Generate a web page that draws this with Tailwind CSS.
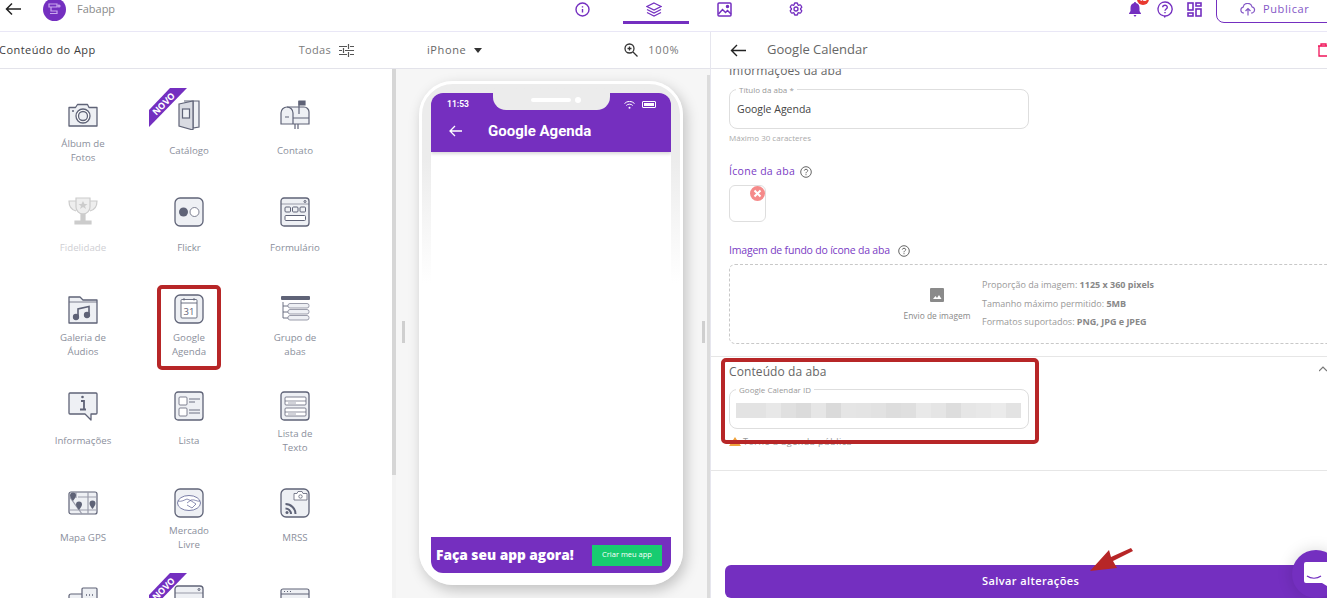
<!DOCTYPE html>
<html lang="pt-BR">
  <head>
    <meta charset="UTF-8" />
    <meta name="viewport" content="width=device-width, initial-scale=1.0" />
    <script src="https://cdn.jsdelivr.net/npm/@tailwindcss/browser@4"></script>
    <title>Fabapp</title>
  </head>
  <body class="bg-white">
    <div class="relative w-[1327px] h-[598px] overflow-hidden flex flex-col font-['Open_Sans',sans-serif] text-[#555]">
      <!-- top bar -->
      <header class="h-[32px] shrink-0 border-b border-[#e9e7f6] pb-[13px] flex items-center">
        <div class="w-[547px] flex items-center">
          <svg class="ml-[5px] w-[17px] h-[14px]" viewBox="0 0 17 14" fill="none" stroke="#222" stroke-width="1.5"><path d="M16 7H1.5M7 1.5 1.5 7 7 12.5" /></svg>
          <div class="ml-[21px] w-[23px] h-[23px] rounded-full bg-[#742fc0] flex items-center justify-center">
            <svg class="w-[13px] h-[13px]" viewBox="0 0 13 13" fill="none" stroke="#c9a8ee" stroke-width="1.2"><path d="M1 1h8v3H1zM3 4v4h6v2.500H2" /><circle cx="11" cy="3" r="1" /></svg>
          </div>
          <span class="ml-[11px] text-[11px] text-[#8a8a8a]">Fabapp</span>
        </div>
        <nav class="flex items-center">
          <div class="w-[71px] flex justify-center">
            <svg class="w-[15px] h-[15px]" viewBox="0 0 15 15" fill="none" stroke="#742fc0" stroke-width="1.4"><circle cx="7.500" cy="7.500" r="6.500" /><path d="M7.500 7v3.500M7.500 4.300v1.200" /></svg>
          </div>
          <div class="relative w-[71px] flex justify-center">
            <svg class="w-[16px] h-[15px]" viewBox="0 0 16 15" fill="none" stroke="#742fc0" stroke-width="1.2"><path d="M8 1 15 4.500 8 8 1 4.500zM1 7.500 8 11l7-3.500M1 10.500 8 14l7-3.500" /></svg>
            <div class="absolute left-[5px] top-[19px] w-[66px] h-[3px] bg-[#742fc0]"></div>
          </div>
          <div class="w-[71px] flex justify-center">
            <svg class="w-[15px] h-[15px]" viewBox="0 0 15 15" fill="none" stroke="#742fc0" stroke-width="1.5"><rect x="1" y="1" width="13" height="13" rx="1" /><path d="m1.500 12 4-4.500 3 3 2-2 3.500 3.500" /><circle cx="10.500" cy="4.500" r="1" fill="#742fc0" /></svg>
          </div>
          <div class="w-[71px] flex justify-center pl-[1px]">
            <svg class="w-[16px] h-[16px]" viewBox="0 0 24 24" fill="none" stroke="#742fc0" stroke-width="2"><path d="M9.594 3.94c.09-.542.56-.94 1.11-.94h2.593c.55 0 1.02.398 1.11.94l.213 1.281c.063.374.313.686.645.87.074.04.147.083.22.127.325.196.72.257 1.075.124l1.217-.456a1.125 1.125 0 0 1 1.37.49l1.296 2.247a1.125 1.125 0 0 1-.26 1.431l-1.003.827c-.293.241-.438.613-.43.992a7.723 7.723 0 0 1 0 .255c-.008.378.137.75.43.991l1.004.827c.424.35.534.955.26 1.43l-1.298 2.247a1.125 1.125 0 0 1-1.369.491l-1.217-.456c-.355-.133-.75-.072-1.076.124a6.47 6.47 0 0 1-.22.128c-.331.183-.581.495-.644.869l-.213 1.281c-.09.543-.56.94-1.11.94h-2.594c-.55 0-1.019-.398-1.11-.94l-.213-1.281c-.062-.374-.312-.686-.644-.87a6.52 6.52 0 0 1-.22-.127c-.325-.196-.72-.257-1.076-.124l-1.217.456a1.125 1.125 0 0 1-1.369-.49l-1.297-2.247a1.125 1.125 0 0 1 .26-1.431l1.004-.827c.292-.24.437-.613.43-.991a6.932 6.932 0 0 1 0-.255c.007-.38-.138-.751-.43-.992l-1.004-.827a1.125 1.125 0 0 1-.26-1.43l1.297-2.247a1.125 1.125 0 0 1 1.37-.491l1.216.456c.356.133.751.072 1.076-.124.072-.044.146-.086.22-.128.332-.183.582-.495.644-.869l.214-1.28Z" /><path d="M15 12a3 3 0 1 1-6 0 3 3 0 0 1 6 0Z" /></svg>
          </div>
        </nav>
        <div class="ml-auto flex items-center">
          <div class="relative">
            <svg class="w-[14px] h-[15px] block" viewBox="0 0 14 15" fill="#742fc0"><path d="M7 0c.7 0 1 .5 1 1 2.500.6 3.500 2.500 3.500 5v3L13 11.500v.5H1v-.5L2.500 9V6C2.500 3.500 3.500 1.600 6 1c0-.5.300-1 1-1zM5.500 13h3L7 15z" /></svg>
            <span class="absolute left-[9px] -top-[9px] w-[12px] h-[12px] rounded-full bg-[#e8392f] text-white text-[7px] leading-[12px] text-center font-bold">13</span>
          </div>
          <svg class="ml-[15px] w-[16px] h-[17px]" viewBox="0 0 16 17" fill="none" stroke="#742fc0" stroke-width="1.4"><path d="M8 1a7 7 0 1 1-1 13.900l1 1.600" /><path d="M8 1a7 7 0 0 0-2 13.700" /><path d="M5.700 6.300C5.800 3.500 10.300 3.500 10.300 6.200 10.300 8 8 8 8 9.800M8 11v1.200" /></svg>
          <svg class="ml-[14px] w-[15px] h-[15px]" viewBox="0 0 15 15" fill="none" stroke="#742fc0" stroke-width="1.600"><rect x="1" y="1" width="5" height="7" /><rect x="9" y="1" width="5" height="3" /><rect x="1" y="11" width="5" height="3" /><rect x="9" y="7" width="5" height="7" /></svg>
          <div class="ml-[14px] w-[120px] h-[30px] -mt-[8px] -mr-[9px] border border-[#742fc0] rounded-bl-[8px] flex items-center pl-[23px] pt-[2px] mb-[-6px]">
            <svg class="w-[16px] h-[13px]" viewBox="0 0 16 13" fill="none" stroke="#8457c6" stroke-width="1.200"><path d="M4 10H3.500a3 3 0 0 1-.3-5.900A4.500 4.500 0 0 1 12 3.800 3.200 3.200 0 0 1 12.300 10H11" /><path d="M8 12.500V6M5.500 8 8 5.500 10.500 8" /></svg>
            <span class="ml-[7px] text-[11px] tracking-[0.6px] text-[#8457c6]">Publicar</span>
          </div>
        </div>
      </header>

      <div class="flex-1 flex min-h-0">
        <!-- left column: templates + preview -->
        <div class="w-[710px] shrink-0 flex flex-col">
          <div class="h-[37px] shrink-0 border-b border-[#e3e3ea] flex items-center text-[11px]">
            <span class="-ml-[1px] text-[#3d3d3d] tracking-[0.45px]">Conteúdo do App</span>
            <span class="ml-[203px] text-[#7b7b7b] tracking-[0.3px]">Todas</span>
            <svg class="ml-[8px] w-[15px] h-[14px]" viewBox="0 0 15 14" fill="none" stroke="#555" stroke-width="1.200"><path d="M0 3.500h8M11 3.500h4M9.500 1v5M0 7.500h3M6 7.500h9M4.500 5v5M0 11.500h8M11 11.500h4M9.500 9v5" /></svg>
            <span class="ml-[73px] text-[#666] tracking-[0.6px]">iPhone</span>
            <div class="ml-[8px] w-0 h-0 border-x-[4.500px] border-x-transparent border-t-[5px] border-t-[#333]"></div>
            <svg class="ml-[142px] w-[14px] h-[14px]" viewBox="0 0 14 14" fill="none" stroke="#333" stroke-width="1.300"><circle cx="5.500" cy="5.500" r="4.500" /><path d="m9 9 4.500 4.500M3.500 5.500h4M5.500 3.500v4" /></svg>
            <span class="ml-[10px] text-[#777] tracking-[0.8px]">100%</span>
          </div>
          <div class="flex-1 flex min-h-0">
            <!-- template grid -->
            <div class="w-[392px] shrink-0 pl-[30px] pt-[31px] overflow-hidden">
              <div class="grid grid-cols-[repeat(3,106px)] auto-rows-[97px] text-[9.700px] leading-[14px] text-[#8b8f9c] text-center">
                <div class="flex flex-col items-center">
                  <svg class="w-[30px] h-[30px]" viewBox="0 0 30 30" fill="#eef0f4" stroke="#5f6377" stroke-width="1.300"><path d="M1 7.500h6.500l2-3h10l1.500 3h8v18.500H1z" stroke-linejoin="round" /><circle cx="15" cy="16" r="7" fill="#fff" /><circle cx="15" cy="16" r="4.500" /><path d="M4 11h2" /></svg>
                  <div class="mt-[7px] h-[28px] flex items-center">Álbum de<br />Fotos</div>
                </div>
                <div class="relative flex flex-col items-center">
                  <svg class="absolute left-[13px] -top-[12px] w-[38px] h-[39px]" viewBox="0 0 38 39"><path d="M0 22 21 0h17L0 39z" fill="#742fc0" /></svg>
                  <span class="absolute left-[14px] -top-[1px] text-[9px] leading-[10px] font-bold text-white -rotate-45">NOVO</span>
                  <svg class="w-[30px] h-[30px]" viewBox="0 0 30 30" fill="#d9dbe2" stroke="#5f6377" stroke-width="1.200"><path d="M10 1h15v26l-6 1V1" fill="#eef0f4" /><path d="M5 4 19 1v29L5 26z" /><rect x="8.500" y="9" width="7" height="9" fill="#eef0f4" /></svg>
                  <div class="mt-[7px] h-[28px] flex items-center">Catálogo</div>
                </div>
                <div class="flex flex-col items-center">
                  <svg class="w-[30px] h-[30px]" viewBox="0 0 30 30" fill="#eef0f4" stroke="#5f6377" stroke-width="1.200"><path d="M1 24V13a6 6 0 0 1 6-6h17a5 5 0 0 1 5 5v12z" /><path d="M13 24V13a6 6 0 0 0-6-6" fill="none" /><path d="M19 14V1" fill="none" /><path d="M19 1h6v4h-6z" fill="#5f6377" /><path d="M13 18h16M15 24v5M18 24v5M5 17h4" fill="none" /></svg>
                  <div class="mt-[7px] h-[28px] flex items-center">Contato</div>
                </div>

                <div class="flex flex-col items-center">
                  <svg class="w-[30px] h-[30px]" viewBox="0 0 30 30" fill="#eee" stroke="#ccc" stroke-width="1.200"><path d="M8 1h14v9a7 7 0 0 1-14 0zM8 4H1c0 6 3 9 7 10M22 4h7c0 6-3 9-7 10" /><path d="M15 4l1.500 3h3l-2.500 2 1 3-3-2-3 2 1-3-2.500-2h3z" fill="#ccc" stroke="none" /><path d="M13 17h4v6h-4zM7 24h16v3H7z" fill="#ccc" /></svg>
                  <div class="mt-[7px] h-[28px] flex items-center text-[#cfcfd4]">Fidelidade</div>
                </div>
                <div class="flex flex-col items-center">
                  <svg class="w-[30px] h-[30px]" viewBox="0 0 30 30"><rect x="1" y="1" width="28" height="28" rx="5" fill="#eef0f4" stroke="#5f6377" stroke-width="1.300" /><circle cx="9.500" cy="15" r="4.500" fill="#5f6377" /><circle cx="20.500" cy="15" r="4.500" fill="#fff" stroke="#5f6377" stroke-width=".8" /></svg>
                  <div class="mt-[7px] h-[28px] flex items-center">Flickr</div>
                </div>
                <div class="flex flex-col items-center">
                  <svg class="w-[30px] h-[30px]" viewBox="0 0 30 30" fill="none" stroke="#5f6377"><rect x="1" y="1" width="28" height="28" rx="3" fill="#eef0f4" stroke-width="1.300" /><circle cx="25" cy="4.500" r="1" /><path d="M1 7h28" stroke-width=".6" /><rect x="5" y="10" width="5.500" height="5" rx="1" /><rect x="12.500" y="10" width="5.500" height="5" rx="1" /><rect x="20" y="10" width="5.500" height="5" rx="1" /><rect x="5" y="18.500" width="20.500" height="5" rx="1" fill="#fff" /></svg>
                  <div class="mt-[7px] h-[28px] flex items-center">Formulário</div>
                </div>

                <div class="flex flex-col items-center">
                  <svg class="w-[30px] h-[30px]" viewBox="0 0 30 30" fill="#eef0f4" stroke="#5f6377" stroke-width="1.300"><path d="M1 3h11l3 3h14v23H1z" stroke-linejoin="round" /><path d="M1 8h28" stroke-width=".8" /><path d="M10 23V15l11-2.500V21" fill="none" stroke-width="1.600" /><circle cx="8" cy="23" r="2.500" fill="#5f6377" /><circle cx="19" cy="21" r="2.500" fill="#5f6377" /></svg>
                  <div class="mt-[7px] h-[28px] flex items-center">Galeria de<br />Áudios</div>
                </div>
                <div class="relative flex flex-col items-center">
                  <div class="absolute left-[21px] -top-[9px] w-[64px] h-[85px] border-[4px] border-[#b72627] rounded-[5px]"></div>
                  <svg class="w-[30px] h-[30px]" viewBox="0 0 30 30" fill="none" stroke="#5f6377"><rect x="1" y="1" width="28" height="28" rx="5" fill="#eef0f4" stroke-width="1.300" /><rect x="7" y="5.500" width="16" height="18.500" rx="1" fill="#fff" stroke-width=".9" /><path d="M7 9h16M10 4v2.500M20 4v2.500" stroke-width=".9" /><text x="15" y="21" text-anchor="middle" font-size="9.500" font-family="Open Sans" fill="#5f6377" stroke="none">31</text></svg>
                  <div class="mt-[7px] h-[28px] flex items-center">Google<br />Agenda</div>
                </div>
                <div class="flex flex-col items-center">
                  <svg class="w-[30px] h-[30px]" viewBox="0 0 30 30" fill="#eef0f4" stroke="#9b9dab"><rect x="1" y="2" width="29" height="4" rx="1" fill="#5f6377" stroke="none" /><rect x="8" y="9.500" width="21" height="4.500" rx="2" /><rect x="8" y="15.500" width="21" height="4.500" rx="2" /><rect x="8" y="21.500" width="21" height="4.500" rx="2" /><path d="M3 8v16h5M3 12h5M3 18h5" fill="none" stroke="#5f6377" stroke-width=".9" /></svg>
                  <div class="mt-[7px] h-[28px] flex items-center">Grupo de<br />abas</div>
                </div>

                <div class="flex flex-col items-center">
                  <svg class="w-[30px] h-[30px]" viewBox="0 0 30 30" fill="#eef0f4" stroke="#5f6377" stroke-width="1.300"><path d="M2 2h26a1 1 0 0 1 1 1v19a1 1 0 0 1-1 1h-5v6l-6-6H2a1 1 0 0 1-1-1V3a1 1 0 0 1 1-1z" stroke-linejoin="round" /><path d="M13 10h3v8M12 18.500h6" fill="none" stroke-width="1.800" /><circle cx="14.500" cy="6" r="1.300" fill="#5f6377" stroke="none" /></svg>
                  <div class="mt-[6px] h-[28px] flex items-center">Informações</div>
                </div>
                <div class="flex flex-col items-center">
                  <svg class="w-[30px] h-[30px]" viewBox="0 0 30 30" fill="none" stroke="#5f6377"><rect x="1" y="1" width="28" height="28" rx="3" fill="#eef0f4" stroke-width="1.300" /><rect x="5" y="6" width="8" height="8" rx="1" fill="#fff" stroke-width=".8" /><rect x="5" y="17" width="8" height="8" rx="1" fill="#fff" stroke-width=".8" /><path d="M15 8h11M15 11h6M15 19h11M15 22h11" stroke-width=".9" /></svg>
                  <div class="mt-[6px] h-[28px] flex items-center">Lista</div>
                </div>
                <div class="flex flex-col items-center">
                  <svg class="w-[30px] h-[30px]" viewBox="0 0 30 30" fill="none" stroke="#5f6377"><rect x="1" y="1" width="28" height="28" rx="3" fill="#eef0f4" stroke-width="1.300" /><rect x="5" y="6" width="21" height="8" rx="1" fill="#fff" stroke-width=".8" /><rect x="5" y="17" width="21" height="8" rx="1" fill="#fff" stroke-width=".8" /><path d="M5 10h21M5 21h21" stroke-width=".7" /><path d="M8 12h8M8 23h8" stroke="#9b9dab" stroke-width=".9" /></svg>
                  <div class="mt-[6px] h-[28px] flex items-center">Lista de<br />Texto</div>
                </div>

                <div class="flex flex-col items-center">
                  <svg class="w-[30px] h-[30px]" viewBox="0 0 30 30" fill="none" stroke="#5f6377"><rect x="1" y="4" width="28" height="22" rx="2" fill="#eef0f4" stroke-width="1.200" /><path d="M1 8 14 26M1 22h28M20 4v22M8 4v6M10 9h19" stroke="#9b9dab" stroke-width="1.200" /><path d="M5 13S2 9.500 2 7.500a3 3 0 0 1 6 0C8 9.500 5 13 5 13zM11 22s-3-3.500-3-5.500a3 3 0 0 1 6 0c0 2-3 5.500-3 5.500zM24.500 21s-3-3.500-3-5.500a3 3 0 0 1 6 0c0 2-3 5.500-3 5.500z" fill="#5f6377" stroke="none" /></svg>
                  <div class="mt-[6px] h-[28px] flex items-center">Mapa GPS</div>
                </div>
                <div class="flex flex-col items-center">
                  <svg class="w-[30px] h-[30px]" viewBox="0 0 30 30" fill="none" stroke="#5f6377"><rect x="1" y="1" width="28" height="28" rx="5" fill="#eef0f4" stroke-width="1.300" /><ellipse cx="15" cy="15" rx="11.500" ry="7.500" fill="#fff" stroke="#5a5f92" stroke-width=".8" /><path d="M4 13c4 1 6-1 9-2 3 1 6 3 9 5l-4 4-5-3M26 13c-3 1-5-2-9-1l-4 3" stroke="#5a5f92" stroke-width=".7" /></svg>
                  <div class="mt-[6px] h-[28px] flex items-center">Mercado<br />Livre</div>
                </div>
                <div class="flex flex-col items-center">
                  <svg class="w-[30px] h-[30px]" viewBox="0 0 30 30" fill="none" stroke="#5f6377"><rect x="1" y="1" width="28" height="28" rx="5" fill="#eef0f4" stroke-width="1.300" /><path d="M14 12V5.500h3l1-2h4l1 2h4V12z" fill="#fff" stroke-width=".8" /><circle cx="20.500" cy="8.500" r="1.700" stroke-width=".8" /><path d="M5.500 16a10 10 0 0 1 10 10M5.500 20.500a5.500 5.500 0 0 1 5.500 5.500" stroke-width="2" /><circle cx="7" cy="24.500" r="1.500" fill="#5f6377" stroke="none" /></svg>
                  <div class="mt-[6px] h-[28px] flex items-center">MRSS</div>
                </div>

                <div class="flex flex-col items-center">
                  <svg class="w-[30px] h-[30px]" viewBox="0 0 30 30" fill="#eef0f4" stroke="#5f6377" stroke-width="1.200"><rect x="1" y="9" width="18" height="16" rx="2" /><rect x="14" y="3" width="15" height="14" rx="1" fill="#eef0f4" /><path d="M18 10h1M21 10h1M24 10h1" stroke-width="1.500" /></svg>
                </div>
                <div class="relative flex flex-col items-center">
                  <svg class="absolute left-[13px] -top-[12px] w-[38px] h-[39px]" viewBox="0 0 38 39"><path d="M0 22 21 0h17L0 39z" fill="#742fc0" /></svg>
                  <span class="absolute left-[14px] -top-[1px] text-[9px] leading-[10px] font-bold text-white -rotate-45">NOVO</span>
                  <svg class="w-[30px] h-[30px]" viewBox="0 0 30 30" fill="none" stroke="#5f6377"><rect x="1" y="1" width="28" height="28" rx="3" fill="#eef0f4" stroke-width="1.300" /><circle cx="25" cy="4.500" r="1" /><path d="M1 8h28" stroke-width=".6" /></svg>
                </div>
                <div class="flex flex-col items-center">
                  <svg class="w-[30px] h-[30px]" viewBox="0 0 30 30" fill="none" stroke="#5f6377"><rect x="1" y="4" width="28" height="24" rx="2" fill="#eef0f4" stroke-width="1.200" /><path d="M1 9h28M4 6.500h1M7 6.500h1M10 6.500h1" /><path d="m11 22 6-6 3 1-1 3-6 4z" stroke-width=".9" /></svg>
                </div>
              </div>
            </div>
            <div class="w-[4px] shrink-0 bg-[#f3f3f3]"><div class="h-[406px] bg-[#d6d6d6]"></div></div>

            <!-- phone preview -->
            <div class="relative flex-1 bg-[#f6f6f6] pl-[23px] pt-[12px]">
              <div class="absolute left-[6px] top-[252px] w-[3px] h-[22px] bg-[#cfcfcf]"></div>
              <div class="absolute right-[5px] top-[252px] w-[3px] h-[22px] bg-[#cfcfcf]"></div>
              <div class="absolute right-0 top-[6px] bottom-0 w-[3px] bg-[#dcdcdc]"></div>
              <div class="w-[264px] h-[504px] rounded-[34px] border-[3px] border-white shadow-[3px_5px_14px_rgba(0,0,0,0.22)] p-[9px] bg-linear-to-b from-[#ececec] from-15% to-white to-40%">
                <div class="relative h-[480px] rounded-[12px] overflow-hidden bg-white flex flex-col">
                  <div class="h-[59px] shrink-0 bg-[#752fbf] shadow-[0_2px_3px_rgba(0,0,0,0.15)] text-white">
                    <div class="h-[20px] flex items-center justify-between pl-[16px] pr-[15px] pt-[3px]">
                      <span class="text-[8.500px] font-bold font-['Roboto',sans-serif]">11:53</span>
                      <div class="flex items-center gap-[7px]">
                        <svg class="w-[11px] h-[8px]" viewBox="0 0 11 8" fill="none" stroke="#fff"><path d="M.5 2.500a7 7 0 0 1 10 0M2.300 4.500a4.500 4.500 0 0 1 6.400 0" /><circle cx="5.500" cy="6.800" r="1" fill="#fff" stroke="none" /></svg>
                        <div class="w-[14px] h-[7px] rounded-[1px] border border-white p-[1px]"><div class="h-full bg-white"></div></div>
                      </div>
                    </div>
                    <div class="h-[36px] flex items-center pl-[18px]">
                      <svg class="w-[13px] h-[12px]" viewBox="0 0 13 12" fill="none" stroke="#fff" stroke-width="1.300"><path d="M13 6H1M6 1 1 6l5 5" /></svg>
                      <span class="ml-[26px] text-[15px] font-bold font-['Roboto',sans-serif]">Google Agenda</span>
                    </div>
                  </div>
                  <div class="absolute left-[62px] top-0 w-[117px] h-[17px] bg-[#ececec] rounded-b-[13px] flex items-start justify-center pt-[5px] gap-[4px]">
                    <div class="ml-[8px] w-[40px] h-[4px] rounded-full bg-white"></div>
                    <div class="-mt-[1px] w-[6px] h-[6px] rounded-full bg-white"></div>
                  </div>
                  <div class="mt-auto h-[36px] bg-[#752fbf] flex items-center pl-[5px] pr-[9px] justify-between text-white">
                    <span class="text-[13.700px] font-extrabold whitespace-nowrap">Faça seu app agora!</span>
                    <div class="w-[70px] h-[21px] bg-[#17cc70] text-[7.500px] flex items-center justify-center">Criar meu app</div>
                  </div>
                </div>
              </div>
            </div>
          </div>
        </div>

        <!-- right column: tab settings -->
        <div class="flex-1 min-w-0 border-l border-[#e6e6ee] flex flex-col">
          <div class="h-[37px] shrink-0 border-b border-[#e3e3ea] flex items-center pl-[19px] pr-[0px]">
            <svg class="w-[16px] h-[13px]" viewBox="0 0 16 13" fill="none" stroke="#222" stroke-width="1.400"><path d="M16 6.500H1.500M7 1 1.500 6.500 7 12" /></svg>
            <span class="ml-[21px] text-[13px] text-[#666]">Google Calendar</span>
            <svg class="ml-auto -mr-[2px] w-[11px] h-[14px]" viewBox="0 0 11 14" fill="none" stroke="#f0145a" stroke-width="1.300"><path d="M0 3h11M3 3V1h5v2M1 3v10h10V3" /></svg>
          </div>
          <div class="flex-1 min-h-0 overflow-hidden flex flex-col">
            <section class="border-b border-[#e6e6e6] pl-[18px] -mt-[5px] pb-[12px]">
              <h2 class="h-[14px] text-[12px] leading-[14px] text-[#666] tracking-[0.1px]">Informações da aba</h2>
              <div class="relative mt-[11px] w-[300px] h-[40px] border border-[#dedede] rounded-lg flex items-center pl-[7px] pt-[1px] text-[10.500px] text-[#444]">
                Google Agenda
                <span class="absolute left-[6px] -top-[5px] bg-white px-[3px] text-[8px] leading-[10px] text-[#999]">Título da aba *</span>
              </div>
              <p class="mt-[3px] h-[12px] text-[8px] leading-[12px] text-[#aaa]">Máximo 30 caracteres</p>
              <div class="mt-[21px] h-[14px] flex items-center text-[10.500px] text-[#7a3cc4] tracking-[0.3px]">
                Ícone da aba
                <svg class="ml-[5px] w-[12px] h-[12px]" viewBox="0 0 12 12" fill="none" stroke="#555" stroke-width=".9"><circle cx="6" cy="6" r="5.300" /><path d="M4.300 4.600C4.400 2.800 7.700 2.800 7.700 4.600 7.700 5.800 6 5.800 6 7.300M6 8.200v1" /></svg>
              </div>
              <div class="relative mt-[6px] w-[37px] h-[37px] border border-[#dedede] rounded-[6px]">
                <svg class="absolute left-[20px] -top-[0px] w-[15px] h-[15px]" viewBox="0 0 15 15"><circle cx="7.500" cy="7.500" r="7.500" fill="#f58a8a" /><path d="m4.500 4.500 6 6M10.500 4.500l-6 6" stroke="#fff" stroke-width="2" /></svg>
              </div>
              <div class="mt-[22px] h-[14px] flex items-center text-[10.500px] text-[#7a3cc4] tracking-[-0.2px]">
                Imagem de fundo do ícone da aba
                <svg class="ml-[8px] w-[12px] h-[12px]" viewBox="0 0 12 12" fill="none" stroke="#555" stroke-width=".9"><circle cx="6" cy="6" r="5.300" /><path d="M4.300 4.600C4.400 2.800 7.700 2.800 7.700 4.600 7.700 5.800 6 5.800 6 7.300M6 8.200v1" /></svg>
              </div>
              <div class="mt-[6px] w-[620px] h-[80px] border border-dashed border-[#c8c8c8] rounded-[6px] flex items-center pl-[165px]">
                <div class="w-[84px] flex flex-col items-center -mt-[1px]">
                  <svg class="w-[14px] h-[14px] mt-[2px]" viewBox="0 0 14 14"><rect width="14" height="14" rx="1" fill="#8a8a8a" /><path d="m3 11 2.500-3 1.500 2 2-3 2.500 4z" fill="#fff" /></svg>
                  <span class="mt-[9px] text-[8.400px] leading-[10px] text-[#888] whitespace-nowrap">Envio de imagem</span>
                </div>
                <div class="ml-[3px] text-[9px] leading-[18.500px] text-[#999]">
                  <p>Proporção da imagem: <b class="font-bold text-[#888]">1125 x 360 pixels</b></p>
                  <p>Tamanho máximo permitido: <b class="font-bold text-[#888]">5MB</b></p>
                  <p>Formatos suportados: <b class="font-bold text-[#888]">PNG, JPG e JPEG</b></p>
                </div>
              </div>
            </section>

            <section class="relative border-b border-[#e6e6e6] pl-[18px] pt-[8px] pb-[23px]">
              <div class="absolute left-[10px] top-[1px] w-[318px] h-[86px] border-[4px] border-[#b72627] rounded-[5px] z-10"></div>
              <svg class="absolute right-0 top-[8px] w-[8px] h-[8px]" viewBox="0 0 8 8" fill="none" stroke="#777" stroke-width="1.200"><path d="m0 6 4-4 4 4" /></svg>
              <h2 class="h-[14px] text-[12px] leading-[14px] text-[#666] tracking-[0.1px]">Conteúdo da aba</h2>
              <div class="relative mt-[10px] w-[300px] h-[40px] border border-[#dedede] rounded-lg flex items-center pl-[6px]">
                <span class="absolute left-[6px] -top-[5px] bg-white px-[3px] text-[8px] leading-[10px] text-[#999]">Google Calendar ID</span>
                <div class="mt-[3px] flex h-[15px] w-[285px]">
                  <div class="flex-1 bg-[#e3e3e3]"></div>
                  <div class="flex-1 bg-[#e3e3e3]"></div>
                  <div class="flex-1 bg-[#e8e8e8]"></div>
                  <div class="flex-1 bg-[#e0e0e0]"></div>
                  <div class="flex-1 bg-[#dbdbdb]"></div>
                  <div class="flex-1 bg-[#e6e6e6]"></div>
                  <div class="flex-1 bg-[#dadada]"></div>
                  <div class="flex-1 bg-[#e5e5e5]"></div>
                  <div class="flex-1 bg-[#e4e4e4]"></div>
                  <div class="flex-1 bg-[#e2e2e2]"></div>
                  <div class="flex-1 bg-[#dddddd]"></div>
                  <div class="flex-1 bg-[#dfdfdf]"></div>
                  <div class="flex-1 bg-[#e9e9e9]"></div>
                  <div class="flex-1 bg-[#e5e5e5]"></div>
                  <div class="flex-1 bg-[#dddddd]"></div>
                  <div class="flex-1 bg-[#e6e6e6]"></div>
                  <div class="flex-1 bg-[#e8e8e8]"></div>
                  <div class="flex-1 bg-[#ebebeb]"></div>
                  <div class="flex-1 bg-[#e3e3e3]"></div>
                </div>
              </div>
              <div class="mt-[6px] h-[12px] flex items-center text-[9px] text-[#999]">
                <div class="w-0 h-0 border-x-[6px] border-x-transparent border-b-[9px] border-b-[#f0a23c]"></div>
                <span class="ml-[2px] mt-[1px] tracking-[0.5px]">Torne a agenda pública</span>
              </div>
            </section>

            <div class="mt-auto ml-[14px] w-[620px] h-[33px] shrink-0 bg-[#742fc0] rounded-[6px] flex items-center pl-[257px] text-[11px] font-semibold text-white tracking-[0.4px]">Salvar alterações</div>
          </div>
        </div>
      </div>

      <!-- annotation arrow and chat launcher over the save button -->
      <svg class="absolute left-[1088px] top-[546px] w-[48px] h-[28px]" viewBox="0 0 48 28"><path d="M45 5 43 2 23 11 21 4 2 25 29 22 25 15z" fill="#b72627" /></svg>
      <div class="absolute left-[1292px] top-[550px] w-[48px] h-[48px] rounded-full bg-[#742fc0] shadow-[0_0_16px_rgba(0,0,0,0.15)] pl-[12px] pt-[12px]">
        <svg class="w-[23px] h-[24px]" viewBox="0 0 23 24"><path d="M2 0h21v24l-5-3H2a2 2 0 0 1-2-2V2a2 2 0 0 1 2-2z" fill="#fff" /><path d="M3 14c4 3 10 3 14 0" fill="none" stroke="#742fc0" stroke-width="1.200" /></svg>
      </div>
    </div>
  </body>
</html>
